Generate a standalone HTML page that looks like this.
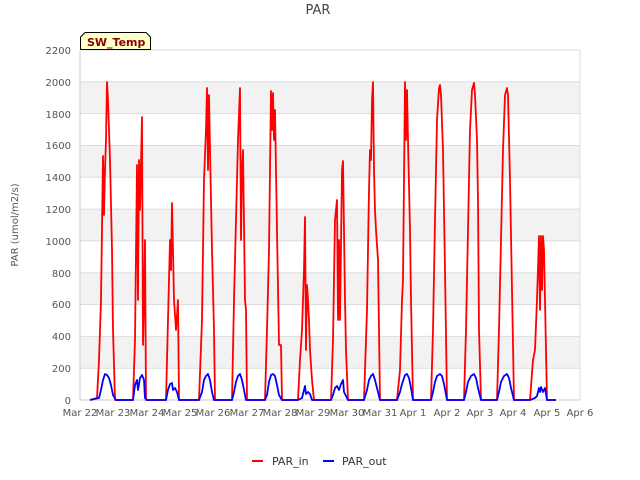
<!DOCTYPE html>
<html><head><meta charset="utf-8"><style>
body{margin:0;background:#fff}
svg{display:block;font-family:"DejaVu Sans","Liberation Sans",sans-serif}
</style></head><body>
<svg width="640" height="480" viewBox="0 0 640 480">
<rect width="640" height="480" fill="#fff"/>
<text x="318" y="14" font-size="13" fill="#444" text-anchor="middle">PAR</text>
<g fill="#f2f2f2">
<rect x="80" y="81.8" width="500" height="31.8"/>
<rect x="80" y="145.5" width="500" height="31.8"/>
<rect x="80" y="209.1" width="500" height="31.8"/>
<rect x="80" y="272.7" width="500" height="31.8"/>
<rect x="80" y="336.4" width="500" height="31.8"/>
</g>
<g stroke="#ddd" stroke-width="1">
<line x1="80" y1="50" x2="580" y2="50"/><line x1="80" y1="81.8" x2="580" y2="81.8"/>
<line x1="80" y1="113.6" x2="580" y2="113.6"/><line x1="80" y1="145.5" x2="580" y2="145.5"/>
<line x1="80" y1="177.3" x2="580" y2="177.3"/><line x1="80" y1="209.1" x2="580" y2="209.1"/>
<line x1="80" y1="240.9" x2="580" y2="240.9"/><line x1="80" y1="272.7" x2="580" y2="272.7"/>
<line x1="80" y1="304.5" x2="580" y2="304.5"/><line x1="80" y1="336.4" x2="580" y2="336.4"/>
<line x1="80" y1="368.2" x2="580" y2="368.2"/>
<line x1="580" y1="50" x2="580" y2="400"/>
</g>
<line x1="80" y1="50" x2="80" y2="400" stroke="#ccc"/>
<line x1="80" y1="400" x2="580" y2="400" stroke="#ccc"/>
<g font-size="10" fill="#555" text-anchor="end">
<text x="71" y="54">2200</text><text x="71" y="86">2000</text><text x="71" y="118">1800</text>
<text x="71" y="149">1600</text><text x="71" y="181">1400</text><text x="71" y="213">1200</text>
<text x="71" y="245">1000</text><text x="71" y="277">800</text><text x="71" y="308">600</text>
<text x="71" y="340">400</text><text x="71" y="372">200</text><text x="71" y="404">0</text>
</g>
<g font-size="10" fill="#555" text-anchor="middle">
<text x="80" y="416">Mar 22</text><text x="113" y="416">Mar 23</text><text x="147" y="416">Mar 24</text>
<text x="180" y="416">Mar 25</text><text x="213" y="416">Mar 26</text><text x="247" y="416">Mar 27</text>
<text x="280" y="416">Mar 28</text><text x="313" y="416">Mar 29</text><text x="347" y="416">Mar 30</text>
<text x="380" y="416">Mar 31</text><text x="413" y="416">Apr 1</text><text x="447" y="416">Apr 2</text>
<text x="480" y="416">Apr 3</text><text x="513" y="416">Apr 4</text><text x="547" y="416">Apr 5</text>
<text x="580" y="416">Apr 6</text>
</g>
<text transform="translate(18,225) rotate(-90)" font-size="10" fill="#555" text-anchor="middle">PAR (umol/m2/s)</text>
<polyline fill="none" stroke="#f00" stroke-width="1.8" stroke-linejoin="round" points="
90,400 97,398 99,360 101,300 103,156 104,215 105,170 106,140 107,82 108,100 110,160 112,250 113,330 115,400
133,400 135,340 137,165 138,300 139,160 140,210 142,117 143,345 144,300 145,240 146,400 147,400
166,400 168,320 170,240 171,270 172,203 173,250 174,300 176,330 178,300 179,400
199,400 202,320 204,180 206,130 207,88 208,170 209,95 210,150 212,250 214,330 215,400
232,400 234,300 236,220 238,140 240,88 241,240 242,170 243,150 245,300 246,310 247,400
265,400 267,330 269,250 271,91 272,130 273,93 274,140 275,110 277,230 279,345 281,345 282,400
298,400 300,360 302,330 304,270 305,217 306,350 307,285 308,300 309,320 310,350 312,380 314,400
331,400 333,340 335,220 337,200 338,320 339,240 340,320 342,170 343,161 345,300 346,350 348,400
364,400 367,310 369,190 370,150 371,160 372,100 373,82 374,170 375,210 376,230 378,260 380,400
397,400 400,370 402,300 403,280 405,82 406,140 407,90 408,140 410,230 411,300 413,400
431,400 433,330 435,220 437,120 439,88 440,85 441,95 443,150 445,270 447,400
464,400 466,330 468,230 470,130 472,90 474,83 475,95 477,140 478,200 479,330 481,400
497,400 499,330 501,240 503,150 505,95 507,88 508,95 510,180 512,290 514,400
530,400 533,360 535,350 537,300 539,236 540,310 541,236 542,290 543,236 544,250 545,300 547,400 556,400"/>
<polyline fill="none" stroke="#00f" stroke-width="1.8" stroke-linejoin="round" points="
90,400 99,398 101,390 103,380 105,374 107,375 109,378 111,385 113,395 116,400
133,400 135,385 137,380 138,390 140,378 142,375 144,380 145,398 147,400
166,400 168,390 170,384 172,383 173,390 175,388 177,392 179,400
199,400 202,392 204,380 206,376 208,374 210,380 212,392 214,400
232,400 234,392 236,382 238,376 240,374 242,380 244,390 246,400
265,400 267,395 269,382 271,375 273,374 275,376 277,385 279,395 282,400
298,400 302,398 304,390 305,386 306,394 308,392 310,394 312,400
331,400 333,395 335,388 337,386 339,390 341,384 343,380 344,392 346,396 348,400
364,400 367,390 369,380 371,376 373,374 375,380 377,388 380,400
397,400 400,392 402,384 405,375 407,374 409,378 411,388 413,400
431,400 433,392 435,382 437,376 440,374 442,376 444,384 447,400
464,400 466,392 468,382 471,376 474,374 476,378 478,388 481,400
497,400 499,392 501,382 504,376 507,374 509,378 511,388 514,400
530,400 535,398 537,396 539,388 540,392 541,387 543,392 545,388 547,400 556,400"/>
<path d="M80.5,49.5 V37 L85,32.5 H146 L150.5,37 V49.5 Z" fill="#ffffcc" stroke="#000"/>
<text x="87" y="46" font-size="11" font-weight="bold" fill="#8b0000">SW_Temp</text>
<line x1="252" y1="461" x2="263" y2="461" stroke="#f00" stroke-width="2"/>
<text x="272" y="465" font-size="11" fill="#333">PAR_in</text>
<line x1="323" y1="461" x2="334" y2="461" stroke="#00f" stroke-width="2"/>
<text x="342" y="465" font-size="11" fill="#333">PAR_out</text>
</svg>
</body></html>
